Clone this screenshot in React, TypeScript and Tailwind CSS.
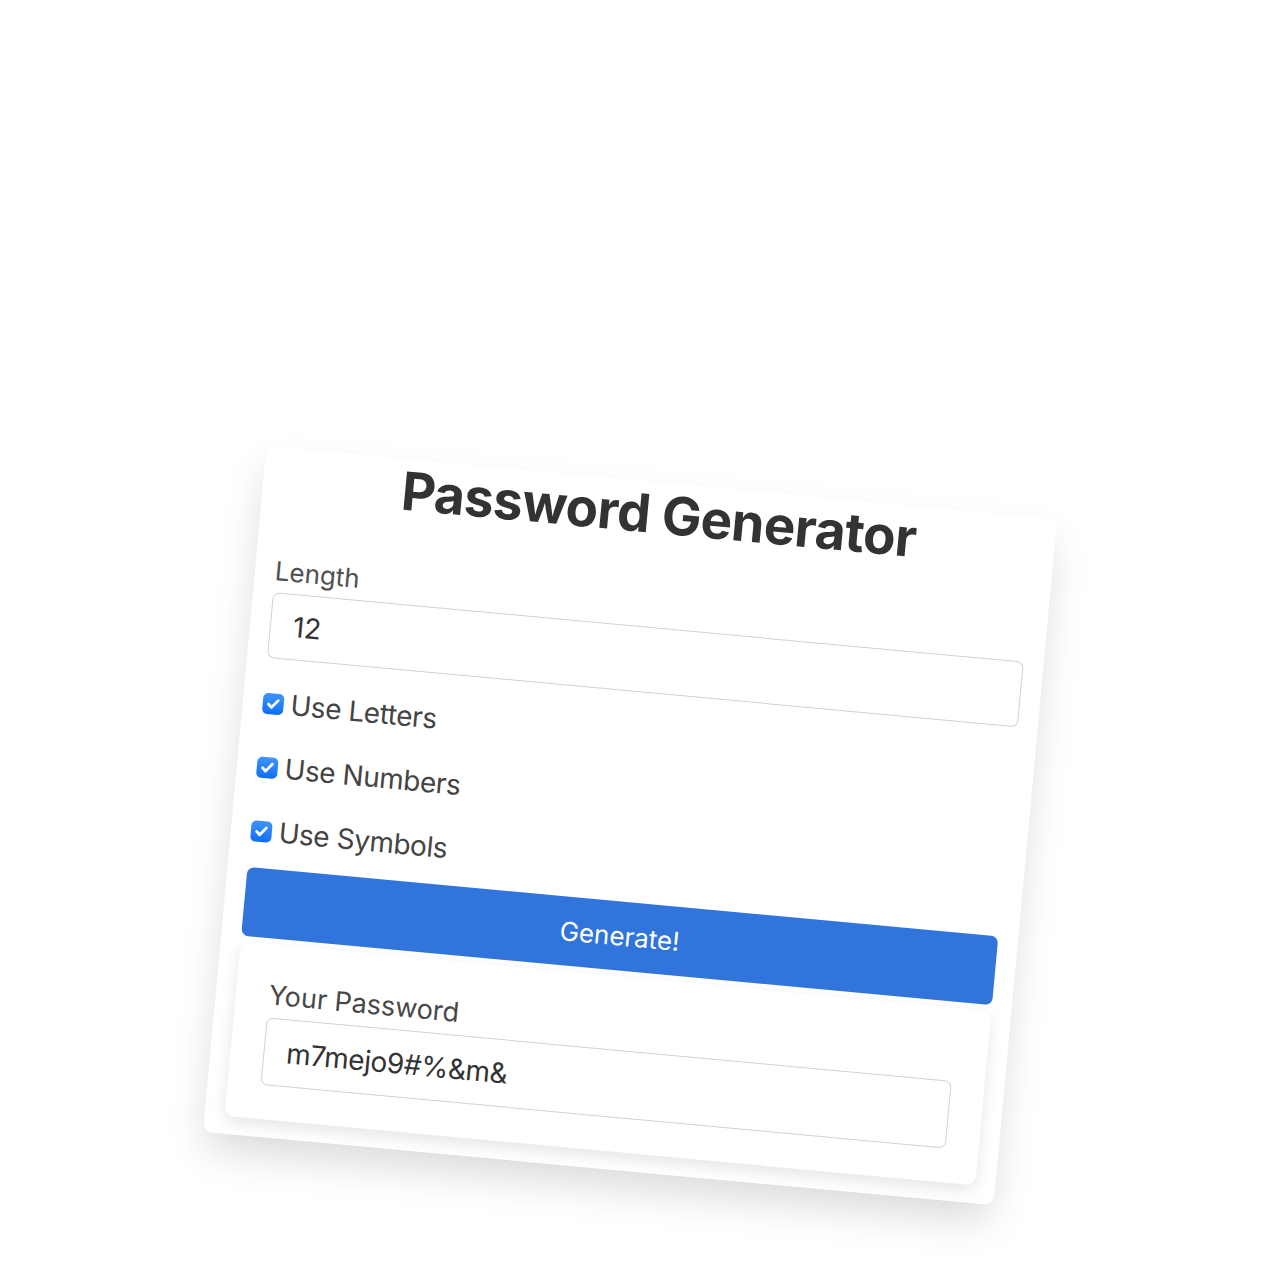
import { useState } from 'react';

type Option = { key: string; label: string };

const options: Option[] = [
  { key: 'letters', label: 'Use Letters' },
  { key: 'numbers', label: 'Use Numbers' },
  { key: 'symbols', label: 'Use Symbols' },
];

function CheckBox({ checked, onClick }: { checked: boolean; onClick: () => void }) {
  return (
    <span
      onClick={onClick}
      className={
        checked
          ? 'flex h-[21px] w-[21px] shrink-0 items-center justify-center rounded-[5px] bg-gradient-to-b from-[#3d95fb] to-[#0c6ef4]'
          : 'flex h-[21px] w-[21px] shrink-0 items-center justify-center rounded-[5px] border border-[#bbb] bg-white'
      }
    >
      {checked && (
        <svg width="15" height="15" viewBox="0 0 14 14" fill="none">
          <path d="M2.6 7.4 5.6 10.3 11.4 3.4" stroke="white" strokeWidth="2.6" strokeLinecap="round" strokeLinejoin="round" />
        </svg>
      )}
    </span>
  );
}

export default function App() {
  const [length, setLength] = useState('12');
  const [flags, setFlags] = useState<Record<string, boolean>>({ letters: true, numbers: true, symbols: true });
  const [password] = useState('m7mejo9#%&m&');

  return (
    <div className="h-[1270px] w-[1270px] overflow-hidden bg-white pl-[233px] pt-[481px] font-['Inter','Liberation_Sans',sans-serif]">
      <div className="w-[794px] rotate-[5.3deg] rounded-[10px] bg-white px-5 pb-[18px] shadow-[0_20px_40px_-4px_rgba(0,0,0,0.15)]">
        <h2 className="text-center text-[53px] font-bold leading-[64px] tracking-[-0.6px] text-[#333]">Password Generator</h2>

        <label className="mt-[45px] block text-[26px] leading-[30px] text-[#505050]">Length</label>
        <input
          value={length}
          onChange={(e) => setLength(e.target.value)}
          className="mt-[6px] block h-[66px] w-full rounded-[7px] border border-[#d2d2d2] px-[22px] text-[28px] text-[#333] outline-none"
        />

        <div className="mt-[28px] flex flex-col gap-[30px]">
          {options.map((o) => (
            <div key={o.key} className="flex h-[34px] items-center gap-[7px] text-[28px] leading-[34px] tracking-[-0.4px] text-[#444]">
              <CheckBox checked={flags[o.key]} onClick={() => setFlags({ ...flags, [o.key]: !flags[o.key] })} />
              <span>{o.label}</span>
            </div>
          ))}
        </div>

        <button className="mt-[20px] block h-[69px] w-full rounded-[7px] bg-[#3174dc] text-[26px] text-white">Generate!</button>

        <div className="mt-[6px] rounded-[10px] bg-white px-[33px] pb-[34px] pt-[35px] shadow-[0_6px_16px_rgba(0,0,0,0.1)]">
          <label className="block text-[27px] leading-[32px] text-[#484848]">Your Password</label>
          <input
            readOnly
            value={password}
            className="mt-[6px] block h-[68px] w-full rounded-[7px] border border-[#d2d2d2] px-[22px] text-[28px] tracking-[-0.4px] text-[#333] outline-none"
          />
        </div>
      </div>
    </div>
  );
}
